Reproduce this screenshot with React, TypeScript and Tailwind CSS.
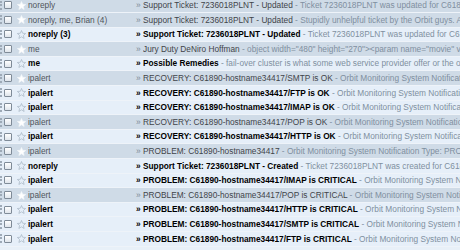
import React from 'react';

type Row = { from: string; subject: string; snippet: string; unread: boolean };

const rows: Row[] = [
  { from: 'noreply', subject: 'Support Ticket: 7236018PLNT - Updated', snippet: 'Ticket 7236018PLNT was updated for C61890 by Orbit Support', unread: false },
  { from: 'noreply, me, Brian (4)', subject: 'Support Ticket: 7236018PLNT - Updated', snippet: 'Stupidly unhelpful ticket by the Orbit guys. Again.', unread: false },
  { from: 'noreply (3)', subject: 'Support Ticket: 7236018PLNT - Updated', snippet: 'Ticket 7236018PLNT was updated for C61890 by Orbit Support', unread: true },
  { from: 'me', subject: 'Jury Duty DeNiro Hoffman', snippet: 'object width="480" height="270"><param name="movie" value=', unread: false },
  { from: 'me', subject: 'Possible Remedies', snippet: 'fail-over cluster is what some web service provider offer or the other', unread: true },
  { from: 'ipalert', subject: 'RECOVERY: C61890-hostname34417/SMTP is OK', snippet: 'Orbit Monitoring System Notification Type: RECOVERY', unread: false },
  { from: 'ipalert', subject: 'RECOVERY: C61890-hostname34417/FTP is OK', snippet: 'Orbit Monitoring System Notification Type: RECOVERY', unread: true },
  { from: 'ipalert', subject: 'RECOVERY: C61890-hostname34417/IMAP is OK', snippet: 'Orbit Monitoring System Notification Type: RECOVERY', unread: true },
  { from: 'ipalert', subject: 'RECOVERY: C61890-hostname34417/POP is OK', snippet: 'Orbit Monitoring System Notification Type: RECOVERY', unread: false },
  { from: 'ipalert', subject: 'RECOVERY: C61890-hostname34417/HTTP is OK', snippet: 'Orbit Monitoring System Notification Type: RECOVERY', unread: true },
  { from: 'ipalert', subject: 'PROBLEM: C61890-hostname34417', snippet: 'Orbit Monitoring System Notification Type: PROBLEM', unread: false },
  { from: 'noreply', subject: 'Support Ticket: 7236018PLNT - Created', snippet: 'Ticket 7236018PLNT was created for C61890 by Orbit Support', unread: true },
  { from: 'ipalert', subject: 'PROBLEM: C61890-hostname34417/IMAP is CRITICAL', snippet: 'Orbit Monitoring System Notification Type: PROBLEM', unread: true },
  { from: 'ipalert', subject: 'PROBLEM: C61890-hostname34417/POP is CRITICAL', snippet: 'Orbit Monitoring System Notification Type: PROBLEM', unread: false },
  { from: 'ipalert', subject: 'PROBLEM: C61890-hostname34417/HTTP is CRITICAL', snippet: 'Orbit Monitoring System Notification Type: PROBLEM', unread: true },
  { from: 'ipalert', subject: 'PROBLEM: C61890-hostname34417/SMTP is CRITICAL', snippet: 'Orbit Monitoring System Notification Type: PROBLEM', unread: true },
  { from: 'ipalert', subject: 'PROBLEM: C61890-hostname34417/FTP is CRITICAL', snippet: 'Orbit Monitoring System Notification Type: PROBLEM', unread: true },
];

const Star = ({ filled }: { filled: boolean }) => (
  <svg width="9" height="9" viewBox="0 0 10 10" className="shrink-0">
    <path
      d="M5 0.6 L6.3 3.6 L9.6 3.9 L7.1 6.1 L7.9 9.4 L5 7.6 L2.1 9.4 L2.9 6.1 L0.4 3.9 L3.7 3.6 Z"
      fill={filled ? '#ffffff' : 'none'}
      stroke={filled ? '#f3f6fa' : '#a9b6c4'}
      strokeWidth="0.8"
      strokeLinejoin="round"
    />
  </svg>
);

export default function App() {
  return (
    <div className="w-[460px] h-[250px] overflow-hidden bg-[#e8f0f8] font-['Liberation_Sans',Arial,sans-serif] text-[8.3px]">
      <div className="-mt-[1.5px]">
        {rows.map((r, i) => (
          <div
            key={i}
            className={`flex items-center h-[14.6px] border-b border-[#eef3f9] whitespace-nowrap ${r.unread ? 'bg-[#e6eff9]' : 'bg-[#cfdbe7]'}`}
          >
            {/* grip */}
            <div className="w-[3px] h-[9px] border-l-2 border-dotted border-[#9eaab7] shrink-0" />
            {/* checkbox */}
            <div className="ml-[1px] w-[8px] h-[8px] shrink-0 rounded-[1px] border border-[#7f8b98] bg-gradient-to-b from-white to-[#dfe5ec]" />
            <div className="ml-[5px] w-[9px] flex items-center shrink-0">
              <Star filled={!r.unread} />
            </div>
            <div className={`ml-[2px] w-[108px] shrink-0 overflow-hidden ${r.unread ? 'font-bold text-black' : 'text-[#4f555c]'}`}>
              {r.from}
            </div>
            <div className={`w-[7px] shrink-0 ${r.unread ? 'font-bold text-black' : 'text-[#7d8b99]'}`}>»</div>
            <div className="overflow-hidden">
              <span className={r.unread ? 'font-bold text-black' : 'text-[#3f4449]'}>{r.subject}</span>
              <span className="text-[#7f8fa0]"> - {r.snippet}</span>
            </div>
          </div>
        ))}
      </div>
    </div>
  );
}
